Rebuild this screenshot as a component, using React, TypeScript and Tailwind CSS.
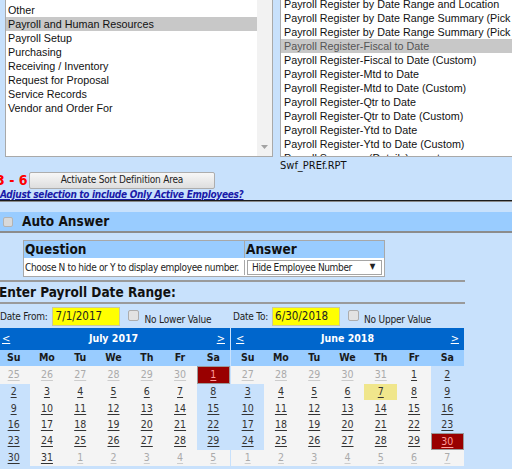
import React from "react";

const tahoma = "font-['DejaVu_Sans_Condensed','DejaVu_Sans',sans-serif]";
const arial = "font-['Liberation_Sans',Arial,sans-serif]";

const leftItems = [
  "Other",
  "Payroll and Human Resources",
  "Payroll Setup",
  "Purchasing",
  "Receiving / Inventory",
  "Request for Proposal",
  "Service Records",
  "Vendor and Order For",
];

const rightItems = [
  "Payroll Register by Date Range and Location",
  "Payroll Register by Date Range Summary (Pick a Location)",
  "Payroll Register by Date Range Summary (Pick a Department)",
  "Payroll Register-Fiscal to Date",
  "Payroll Register-Fiscal to Date (Custom)",
  "Payroll Register-Mtd to Date",
  "Payroll Register-Mtd to Date (Custom)",
  "Payroll Register-Qtr to Date",
  "Payroll Register-Qtr to Date (Custom)",
  "Payroll Register-Ytd to Date",
  "Payroll Register-Ytd to Date (Custom)",
  "Payroll Summary (Details) report",
];

type Day = { d: number; other?: boolean; sel?: boolean; today?: boolean };

const o = (d: number): Day => ({ d, other: true });
const n = (d: number): Day => ({ d });

const july: Day[][] = [
  [o(25), o(26), o(27), o(28), o(29), o(30), { d: 1, sel: true }],
  [2, 3, 4, 5, 6, 7, 8].map(n),
  [9, 10, 11, 12, 13, 14, 15].map(n),
  [16, 17, 18, 19, 20, 21, 22].map(n),
  [23, 24, 25, 26, 27, 28, 29].map(n),
  [n(30), n(31), o(1), o(2), o(3), o(4), o(5)],
];

const june: Day[][] = [
  [o(27), o(28), o(29), o(30), o(31), n(1), n(2)],
  [n(3), n(4), n(5), n(6), { d: 7, today: true }, n(8), n(9)],
  [10, 11, 12, 13, 14, 15, 16].map(n),
  [17, 18, 19, 20, 21, 22, 23].map(n),
  [n(24), n(25), n(26), n(27), n(28), n(29), { d: 30, sel: true }],
  [1, 2, 3, 4, 5, 6, 7].map(o),
];

function Checkbox() {
  return <span className="inline-block w-[11px] h-[11px] rounded-[2px] bg-[#e2e2e2] border border-[#adadad]" />;
}

function Calendar({ title, weeks, className = "" }: { title: string; weeks: Day[][]; className?: string }) {
  return (
    <div className={"w-[233px] flex flex-col " + className}>
      <div className={"h-[22px] bg-[#0066cc] flex items-center justify-between px-[5px] text-white text-[11px] " + tahoma}>
        <span className="underline">&lt;</span>
        <span className="font-bold text-[10.5px]">{title}</span>
        <span className="underline">&gt;</span>
      </div>
      <div className={"grid grid-cols-7 h-[16px] bg-[#99ccff] font-bold text-[10.5px] text-[#1a1a1a] items-center text-center " + tahoma}>
        {["Su", "Mo", "Tu", "We", "Th", "Fr", "Sa"].map((d) => (
          <span key={d}>{d}</span>
        ))}
      </div>
      <div className={"grid grid-cols-7 grid-rows-[18px_repeat(5,16.4px)] bg-[#f4f4f4] text-[10.5px] text-center " + tahoma}>
        {weeks.flat().map((day, i) => {
          const weekend = i % 7 === 0 || i % 7 === 6;
          let cls = "flex items-center justify-center underline underline-offset-2 ";
          if (day.sel) cls += "bg-[#990000] text-[#ff9c9c] border border-[#9a9a9a]";
          else if (day.other) cls += "text-[#aaaaaa] decoration-[#cccccc]";
          else if (day.today) cls += "bg-[#f0e68c] text-[#333333]";
          else if (weekend) cls += "bg-[#c8e1fc] text-[#333333]";
          else cls += "text-[#333333]";
          return (
            <span key={i} className={cls}>
              {day.d}
            </span>
          );
        })}
      </div>
    </div>
  );
}

export default function App() {
  return (
    <div className="w-[512px] h-[469px] overflow-hidden bg-[#c8e1fc] text-black">
      {/* Report lists */}
      <div className="flex h-[171px]">
        <div className="ml-[5px] w-[268px] h-[157px] shrink-0 bg-white border border-t-0 border-[#a9a9a9] flex">
          <div className={"flex-1 pt-[3px] text-[10.75px] leading-[14px] text-[#111] " + arial}>
            {leftItems.map((t) => (
              <div key={t} className={"pl-[2px] " + (t === "Payroll and Human Resources" ? "bg-[#c8c8c8]" : "")}>
                {t}
              </div>
            ))}
          </div>
          <div className="w-[15px] bg-[#f2f2f2] flex flex-col justify-end items-center pb-[7px]">
            <svg width="7" height="4" viewBox="0 0 7 4">
              <path d="M0 0h7L3.5 4z" fill="#a3a3a3" />
            </svg>
          </div>
        </div>
        <div className="ml-[7px] flex-1 flex flex-col min-w-0">
          <div className="h-[157px] shrink-0 bg-white border-l border-b border-[#a9a9a9] overflow-hidden">
            <div className={"-mt-[3px] text-[10.75px] leading-[14px] text-[#111] whitespace-nowrap " + arial}>
              {rightItems.map((t) => (
                <div key={t} className={"pl-[3px] " + (t === "Payroll Register-Fiscal to Date" ? "bg-[#c8c8c8] text-[#555]" : "")}>
                  {t}
                </div>
              ))}
            </div>
          </div>
          <div className={"pt-[3px] shrink-0 text-[11px] leading-[12px] text-[#111] " + tahoma}>Swf_PREf.RPT</div>
        </div>
      </div>

      {/* Sort row */}
      <div className="flex items-center h-[18px]">
        <span className={"-ml-[4px] w-[33px] text-[14px] font-bold text-[#ff0000] whitespace-nowrap " + tahoma}>3 - 6</span>
        <button className={"w-[186px] h-[17px] rounded-[2px] border border-[#adadad] bg-gradient-to-b from-[#f7f7f7] to-[#dedede] text-[10px] tracking-[-0.2px] text-[#222] leading-none " + tahoma}>
          Activate Sort Definition Area
        </button>
      </div>
      <div className={"h-[11px] leading-[11px] text-[10px] tracking-[-0.3px] font-bold italic underline text-[#1a1aa8] whitespace-nowrap " + tahoma}>
        Adjust selection to include Only Active Employees?
      </div>
      <div className="h-px bg-[#1c1c1c]" />
      <div className="h-px bg-[#8a8a8a]" />

      {/* Auto answer */}
      <div className="mt-[10px] h-[21px] bg-[#99ccff] border-b-2 border-[#8c8c8c] flex items-center pl-[3px]">
        <span className="inline-block w-[10px] h-[10px] rounded-[2px] bg-[#d9d9d9] border border-[#b3b3b3]" />
        <span className={"ml-[9px] text-[13.5px] font-bold text-[#111] " + tahoma}>Auto Answer</span>
      </div>

      <div className="mt-[7px] ml-[23px] w-[362px] border border-[#a8a8a8]">
        <div className={"flex h-[17px] bg-[#99ccff] text-[13.5px] font-bold text-[#111] leading-[17px] " + tahoma}>
          <div className="w-[221px] pl-[1px] border-r border-[#a8a8a8]">Question</div>
          <div className="flex-1 pl-[1px]">Answer</div>
        </div>
        <div className={"flex h-[18px] bg-white text-[10px] tracking-[-0.35px] text-[#222] items-center " + tahoma}>
          <div className="w-[221px] pl-[1px] border-r border-[#a8a8a8] whitespace-nowrap">
            Choose N to hide or Y to display employee number.
          </div>
          <div className="flex-1 px-[2px]">
            <div className="h-[15px] border border-[#a5a5a5] flex items-center justify-between pl-[4px] pr-[6px]">
              <span>Hide Employee Number</span>
              <span className="text-[8px]">▼</span>
            </div>
          </div>
        </div>
      </div>

      {/* Date range */}
      <div className="mt-[3px] w-[465px] h-[2px] bg-[#9a9a9a]" />
      <div className={"h-[20px] leading-[20px] -ml-[1px] text-[13.5px] font-bold text-[#111] " + tahoma}>Enter Payroll Date Range:</div>
      <div className="w-[465px] h-[2px] bg-[#9a9a9a]" />

      <div className={"mt-[3px] flex h-[19px] text-[10px] tracking-[-0.2px] text-[#222] " + tahoma}>
        <div className="w-[231px] flex items-center">
          <span>Date From:</span>
          <span className="ml-[4px] w-[68px] h-[19px] bg-[#ffff00] border border-[#c8c8a0] text-[11.5px] tracking-normal pl-[3px] leading-[17px] text-[#222]">7/1/2017</span>
          <span className="ml-[8px] mb-[3px] flex"><Checkbox /></span>
          <span className="ml-[6px] mt-[6px]">No Lower Value</span>
        </div>
        <div className="flex-1 flex items-center pl-[2px]">
          <span>Date To:</span>
          <span className="ml-[4px] w-[68px] h-[19px] bg-[#ffff00] border border-[#c8c8a0] text-[11.5px] tracking-normal pl-[2px] leading-[17px] text-[#222]">6/30/2018</span>
          <span className="ml-[8px] mb-[3px] flex"><Checkbox /></span>
          <span className="ml-[5px] mt-[6px]">No Upper Value</span>
        </div>
      </div>

      <div className="mt-[2px] flex gap-[1px]">
        <Calendar title="July 2017" weeks={july} className="-ml-[3px]" />
        <Calendar title="June 2018" weeks={june} />
      </div>
    </div>
  );
}
